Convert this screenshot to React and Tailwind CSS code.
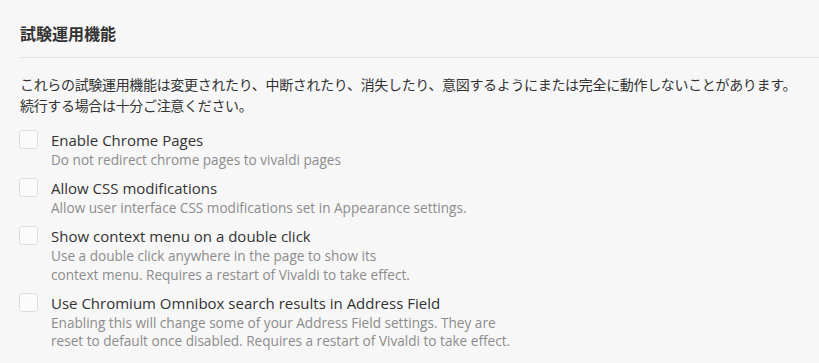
import React from 'react';

const labs = [
  {
    title: 'Enable Chrome Pages',
    desc: ['Do not redirect chrome pages to vivaldi pages'],
  },
  {
    title: 'Allow CSS modifications',
    desc: ['Allow user interface CSS modifications set in Appearance settings.'],
  },
  {
    title: 'Show context menu on a double click',
    desc: [
      'Use a double click anywhere in the page to show its',
      'context menu. Requires a restart of Vivaldi to take effect.',
    ],
  },
  {
    title: 'Use Chromium Omnibox search results in Address Field',
    desc: [
      'Enabling this will change some of your Address Field settings. They are',
      'reset to default once disabled. Requires a restart of Vivaldi to take effect.',
    ],
  },
];

const LabItem = ({ title, desc }) => (
  <label className="flex items-start gap-[13px] mb-[8.5px]">
    <span className="w-[19px] h-[19px] shrink-0 rounded-[3px] border border-[#dedede] bg-[#fbfbfb]" />
    <span className="flex flex-col">
      <span className="text-[15px] leading-[21px] text-[#333]">{title}</span>
      {desc.map((line) => (
        <span key={line} className="text-[13.6px] leading-[18.5px] text-[#8c8c8c]">{line}</span>
      ))}
    </span>
  </label>
);

export default function App() {
  return (
    <div className="min-h-[363px] bg-[#f7f7f7] pl-[20px] pt-[22px] font-['Open_Sans','Noto_Sans_CJK_JP',sans-serif]">
      <h2 className="pb-[13px] border-b border-[#e3e3e3] text-[16px] leading-[22px] font-bold text-[#333] font-['Noto_Sans_CJK_JP',sans-serif]">
        試験運用機能
      </h2>
      <p className="mt-[16px] text-[14px] leading-[21px] tracking-[-0.33px] text-[#333] font-['Noto_Sans_CJK_JP',sans-serif]">
        これらの試験運用機能は変更されたり、中断されたり、消失したり、意図するようにまたは完全に動作しないことがあります。
        <br />
        続行する場合は十分ご注意ください。
      </p>
      <div className="mt-[14px] ml-[-1px]">
        {labs.map((item) => (
          <LabItem key={item.title} {...item} />
        ))}
      </div>
    </div>
  );
}
